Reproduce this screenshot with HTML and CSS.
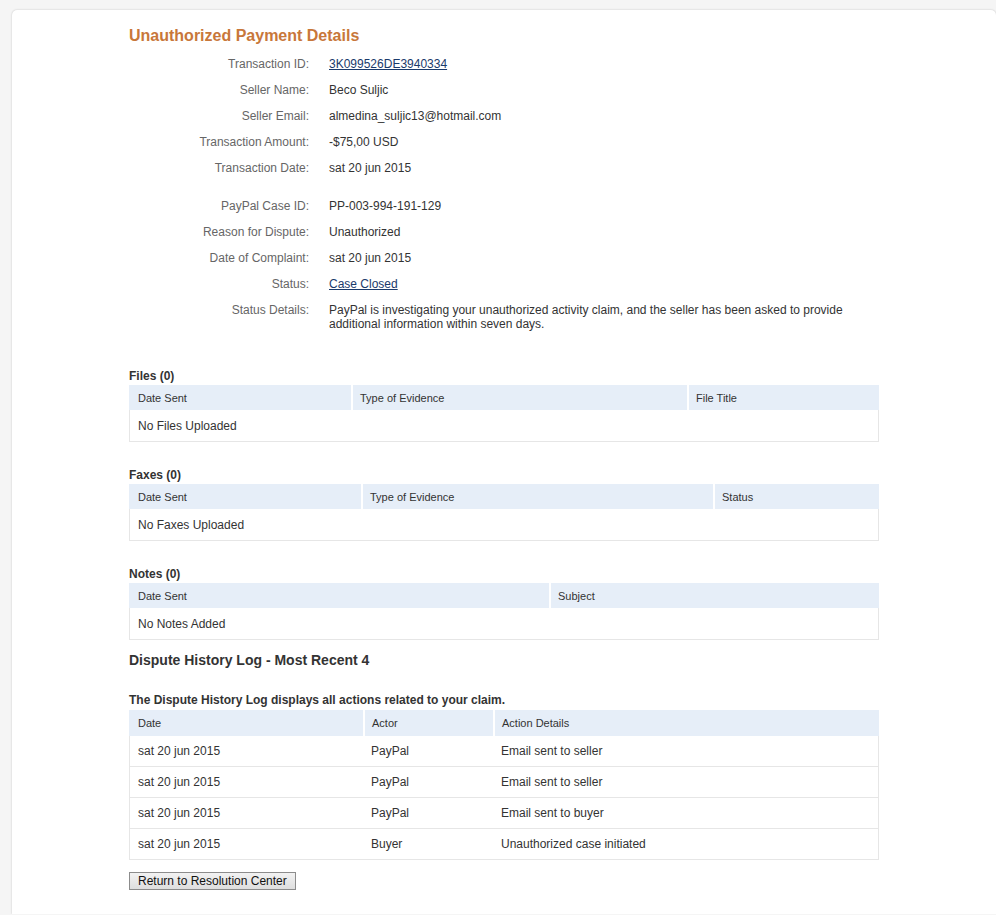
FILE: index.html
```html
<!DOCTYPE html>
<html lang="en">
<head>
<meta charset="utf-8">
<title>Unauthorized Payment Details</title>
<link rel="stylesheet" href="styles.css">
</head>
<body>
<div class="card">
  <div class="content">
    <h1 class="title">Unauthorized Payment Details</h1>

    <dl class="details">
      <dt>Transaction ID:</dt><dd><a href="#">3K099526DE3940334</a></dd>
      <dt>Seller Name:</dt><dd>Beco Suljic</dd>
      <dt>Seller Email:</dt><dd>almedina_suljic13@hotmail.com</dd>
      <dt>Transaction Amount:</dt><dd>-$75,00 USD</dd>
      <dt>Transaction Date:</dt><dd>sat 20 jun 2015</dd>
    </dl>

    <dl class="details details-case">
      <dt>PayPal Case ID:</dt><dd>PP-003-994-191-129</dd>
      <dt>Reason for Dispute:</dt><dd>Unauthorized</dd>
      <dt>Date of Complaint:</dt><dd>sat 20 jun 2015</dd>
      <dt>Status:</dt><dd><a href="#">Case Closed</a></dd>
      <dt>Status Details:</dt><dd>PayPal is investigating your unauthorized activity claim, and the seller has been asked to provide additional information within seven days.</dd>
    </dl>

    <h3 class="section-label first">Files (0)</h3>
    <table class="grid grid-files">
      <thead><tr><th>Date Sent</th><th>Type of Evidence</th><th>File Title</th></tr></thead>
      <tbody><tr class="empty"><td colspan="3">No Files Uploaded</td></tr></tbody>
    </table>

    <h3 class="section-label">Faxes (0)</h3>
    <table class="grid grid-faxes">
      <thead><tr><th>Date Sent</th><th>Type of Evidence</th><th>Status</th></tr></thead>
      <tbody><tr class="empty"><td colspan="3">No Faxes Uploaded</td></tr></tbody>
    </table>

    <h3 class="section-label">Notes (0)</h3>
    <table class="grid grid-notes">
      <thead><tr><th>Date Sent</th><th>Subject</th></tr></thead>
      <tbody><tr class="empty"><td colspan="2">No Notes Added</td></tr></tbody>
    </table>

    <h2 class="log-title">Dispute History Log - Most Recent 4</h2>
    <h3 class="section-label log-intro">The Dispute History Log displays all actions related to your claim.</h3>
    <table class="grid grid-log">
      <thead><tr><th>Date</th><th>Actor</th><th>Action Details</th></tr></thead>
      <tbody>
        <tr><td>sat 20 jun 2015</td><td>PayPal</td><td>Email sent to seller</td></tr>
        <tr><td>sat 20 jun 2015</td><td>PayPal</td><td>Email sent to seller</td></tr>
        <tr><td>sat 20 jun 2015</td><td>PayPal</td><td>Email sent to buyer</td></tr>
        <tr><td>sat 20 jun 2015</td><td>Buyer</td><td>Unauthorized case initiated</td></tr>
      </tbody>
    </table>

    <button class="btn" type="button">Return to Resolution Center</button>
  </div>
</div>
</body>
</html>
```

FILE: styles.css
```css
html, body {
  margin: 0;
  padding: 0;
  background: #f5f5f5;
  font-family: "Liberation Sans", Arial, sans-serif;
  font-size: 12px;
  color: #333;
}

.card {
  margin: 10px 0 0 12px;
  min-height: 904px;
  box-sizing: border-box;
  background: #fff;
  border-radius: 5px 5px 0 0;
  box-shadow: 0 0 2px rgba(0, 0, 0, 0.22);
  padding: 16px 0 20px 117px;
}

.content {
  width: 750px;
}

.title {
  margin: 0 0 11px;
  font-size: 16px;
  line-height: 20px;
  font-weight: bold;
  color: #c8773a;
}

/* label / value pairs */
.details {
  display: grid;
  grid-template-columns: 180px 1fr;
  column-gap: 20px;
  row-gap: 12px;
  margin: 0;
  line-height: 14px;
}

.details dt {
  text-align: right;
  color: #666;
}

.details dd {
  margin: 0;
  color: #333;
}

.details-case {
  margin-top: 24px;
}

.details a {
  color: #1a3a6b;
  text-decoration: underline;
}

.section-label {
  margin: 26px 0 2px;
  font-size: 12px;
  line-height: 14px;
  font-weight: bold;
  color: #333;
}

.section-label.first {
  margin-top: 38px;
}

/* data tables */
.grid {
  width: 750px;
  table-layout: fixed;
  border-collapse: separate;
  border-spacing: 0;
}

.grid th {
  background: #e6eef8;
  height: 25px;
  padding: 0 0 0 9px;
  text-align: left;
  font-weight: normal;
  font-size: 11px;
  color: #333;
}

.grid th + th {
  border-left: 2px solid #fff;
  padding-left: 7px;
}

.grid td {
  height: 30px;
  padding: 0 0 0 8px;
  border-bottom: 1px solid #e6e6e6;
  font-size: 12px;
  color: #333;
}

.grid .empty td {
  height: 31px;
}

.grid td:first-child {
  border-left: 1px solid #e6e6e6;
}

.grid td:last-child {
  border-right: 1px solid #e6e6e6;
}

.grid-files th:nth-child(1) { width: 213px; }
.grid-files th:nth-child(2) { width: 327px; }

.grid-faxes th:nth-child(1) { width: 223px; }
.grid-faxes th:nth-child(2) { width: 343px; }

.grid-notes th:nth-child(1) { width: 411px; }

.grid-log th {
  height: 26px;
}

.grid-log th:nth-child(1) { width: 225px; }
.grid-log th:nth-child(2) { width: 121px; }

.log-title {
  margin: 12px 0 0;
  font-size: 14px;
  line-height: 17px;
  font-weight: bold;
  color: #333;
}

.section-label.log-intro {
  margin: 24px 0 3px;
}

.btn {
  display: block;
  margin-top: 12px;
  height: 18px;
  padding: 0 8px;
  font-family: "Liberation Sans", Arial, sans-serif;
  font-size: 12px;
  line-height: 16px;
  color: #111;
  background: linear-gradient(#f2f2f2, #dedede);
  border: 1px solid #8c8c8c;
  border-radius: 0;
}
```
